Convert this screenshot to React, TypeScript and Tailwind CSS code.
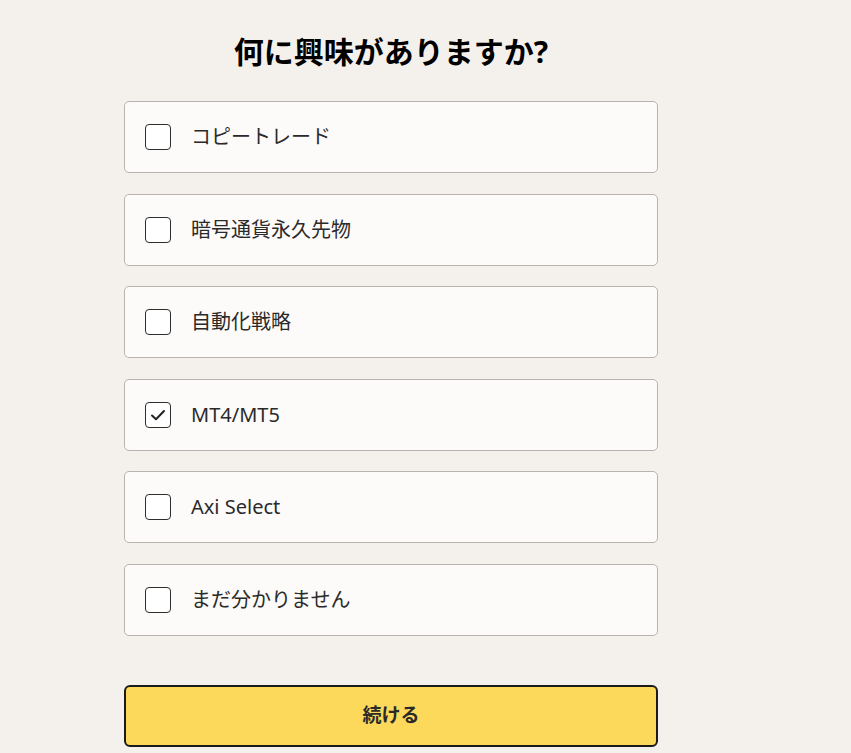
import { useState } from "react";

const options = [
  "コピートレード",
  "暗号通貨永久先物",
  "自動化戦略",
  "MT4/MT5",
  "Axi Select",
  "まだ分かりません",
];

export default function App() {
  const [checked, setChecked] = useState<string[]>(["MT4/MT5"]);

  const toggle = (opt: string) =>
    setChecked((prev) =>
      prev.includes(opt) ? prev.filter((o) => o !== opt) : [...prev, opt]
    );

  return (
    <div
      className="min-h-[753px] w-full bg-[#f4f1ec] flex"
      style={{ fontFamily: '"Noto Sans", "Noto Sans CJK JP", sans-serif' }}
    >
      <div className="w-[782px] flex justify-center">
        <div className="w-[534px] pt-[29px]">
          <h1 className="text-[30px] leading-[46px] font-bold text-black text-center mb-[26px]">
            何に興味がありますか?
          </h1>

          <div className="flex flex-col gap-[20.5px]">
            {options.map((opt) => {
              const on = checked.includes(opt);
              return (
                <label
                  key={opt}
                  className="h-[72px] flex items-center gap-[20px] px-[20px] bg-[#fdfbf9] border border-[#b8b3ae] rounded-[5px] cursor-pointer"
                  onClick={() => toggle(opt)}
                >
                  <span className="w-[26px] h-[26px] shrink-0 border-[1.5px] border-[#2e2e2e] rounded-[4px] bg-white flex items-center justify-center">
                    {on && (
                      <svg width="18" height="18" viewBox="0 0 18 18" fill="none">
                        <path
                          d="M3 9.5 L7 13.2 L15 5"
                          stroke="#222"
                          strokeWidth="2"
                          strokeLinecap="round"
                          strokeLinejoin="round"
                        />
                      </svg>
                    )}
                  </span>
                  <span className="text-[20px] text-[#2b2a2a]">{opt}</span>
                </label>
              );
            })}
          </div>

          <button className="mt-[49px] w-full h-[62px] bg-[#fcd95b] border-2 border-[#1b1b1b] rounded-[6px] text-[19px] font-bold text-[#2b2a2a]">
            続ける
          </button>
        </div>
      </div>
    </div>
  );
}
